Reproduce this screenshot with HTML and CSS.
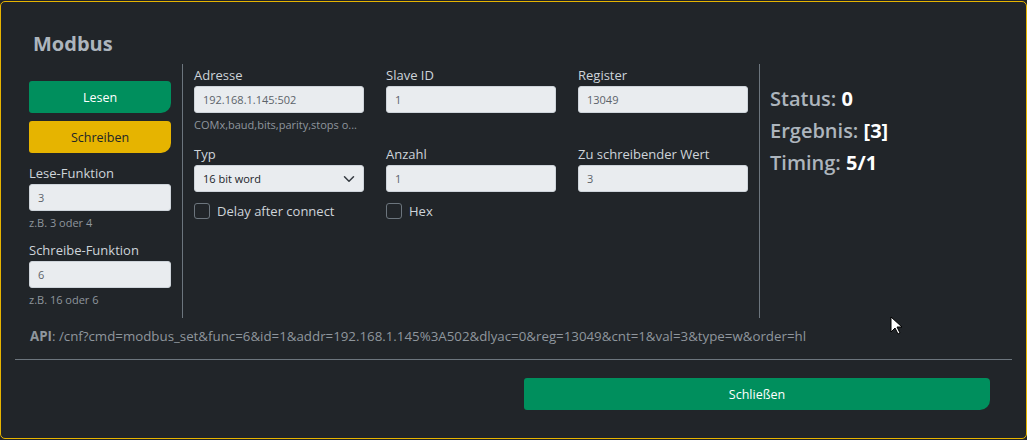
FILE: index.html
```html
<!DOCTYPE html>
<html lang="de">
  <head>
    <meta charset="UTF-8" />
    <meta name="viewport" content="width=device-width, initial-scale=1.0" />
    <title>Modbus</title>
    <link rel="stylesheet" href="styles.css">
  </head>
  <body>
    <div class="modal">
      <h4 class="modal-title">Modbus</h4>
      <div class="modal-body">
        <div class="row">
          <div class="col-left">
            <button class="btn btn-green">Lesen</button>
            <button class="btn btn-yellow">Schreiben</button>

            <div class="field">
              <label>Lese-Funktion</label>
              <input class="input" type="text" value="3" />
              <small class="help">z.B. 3 oder 4</small>
            </div>
            <div class="field field-next">
              <label>Schreibe-Funktion</label>
              <input class="input" type="text" value="6" />
              <small class="help">z.B. 16 oder 6</small>
            </div>
          </div>

          <div class="col-mid">
            <div class="field">
              <label>Adresse</label>
              <input class="input" type="text" value="192.168.1.145:502" />
              <small class="help">COMx,baud,bits,parity,stops o...</small>
            </div>
            <div class="field">
              <label>Slave ID</label>
              <input class="input" type="text" value="1" />
            </div>
            <div class="field">
              <label>Register</label>
              <input class="input" type="text" value="13049" />
            </div>

            <div class="field">
              <label>Typ</label>
              <div class="select-wrap">
                <select class="input select">
                  <option>16 bit word</option>
                  <option>32 bit word</option>
                  <option>float</option>
                </select>
                <svg class="chevron" width="12" height="12" viewBox="0 0 16 16">
                  <path d="M2 5l6 6 6-6" fill="none" stroke="#343a40" stroke-width="2" stroke-linecap="round" stroke-linejoin="round" />
                </svg>
              </div>
              <label class="check"><span class="box"></span>Delay after connect</label>
            </div>
            <div class="field">
              <label>Anzahl</label>
              <input class="input" type="text" value="1" />
              <label class="check"><span class="box"></span>Hex</label>
            </div>
            <div class="field">
              <label>Zu schreibender Wert</label>
              <input class="input" type="text" value="3" />
            </div>
          </div>

          <div class="col-status">
            <div class="stat">Status: <b>0</b></div>
            <div class="stat">Ergebnis: <b>[3]</b></div>
            <div class="stat">Timing: <b>5/1</b></div>
          </div>
        </div>

        <p class="api"><b>API</b>: /cnf?cmd=modbus_set&amp;func=6&amp;id=1&amp;addr=192.168.1.145%3A502&amp;dlyac=0&amp;reg=13049&amp;cnt=1&amp;val=3&amp;type=w&amp;order=hl</p>
      </div>

      <hr class="sep" />

      <div class="modal-footer">
        <button class="btn btn-green btn-close">Schließen</button>
      </div>

      <svg class="cursor" width="14" height="20" viewBox="0 0 14 20">
        <path d="M1 1v15l4-4 3 6 2-1-3-6h5z" fill="#fff" stroke="#000" stroke-width="1" stroke-linejoin="round" />
      </svg>
    </div>
  </body>
</html>
```

FILE: styles.css
```css
* {
  box-sizing: border-box;
}

body {
  margin: 0;
  background-color: #212529;
  font-family: "Open Sans", "Noto Sans", Arial, sans-serif;
  color: #ced4da;
}

.modal {
  position: relative;
  margin-top: 1px;
  height: 438px;
  border: 1px solid #e6b400;
  border-radius: 5px;
  background-color: #212529;
  padding-top: 28px;
}

.modal-title {
  margin: 0 0 6px 32px;
  font-size: 20px;
  line-height: 28px;
  font-weight: 700;
  color: #adb5bd;
}

.modal-body {
  padding-left: 28px;
}

.row {
  display: flex;
}

.col-left {
  width: 154px;
  padding: 17px 11px 10px 0;
  border-right: 1px solid #6c757d;
  display: flex;
  flex-direction: column;
}

.col-mid {
  width: 577px;
  padding: 2px 11px 0 11px;
  border-right: 1px solid #6c757d;
  display: grid;
  grid-template-columns: repeat(3, 170px);
  grid-template-rows: 67px auto;
  column-gap: 22px;
  row-gap: 12px;
  align-content: start;
}

.col-status {
  padding: 19px 0 0 10px;
}

.stat {
  font-size: 20px;
  line-height: 32px;
  font-weight: 600;
  color: #adb5bd;
}

.stat b {
  color: #fff;
  font-weight: 700;
}

.btn {
  height: 32px;
  border: none;
  border-radius: 3px 4px 10px 3px;
  font-family: inherit;
  font-size: 12.5px;
  cursor: pointer;
}

.btn-green {
  background-color: #008f5d;
  color: #fff;
}

.btn-yellow {
  background-color: #e6b400;
  color: #212529;
  margin-top: 8px;
}

.field {
  display: flex;
  flex-direction: column;
  min-width: 0;
}

.col-left .field {
  margin-top: 11px;
}

.col-left .field-next {
  margin-top: 10px;
}

label {
  font-size: 13px;
  line-height: 18px;
  color: #ced4da;
  margin-bottom: 2px;
}

.input {
  height: 27px;
  width: 100%;
  border: 1px solid #ced4da;
  border-radius: 3px;
  background-color: #e9ecef;
  color: #5c636a;
  font-family: inherit;
  font-size: 11px;
  padding: 0 8px;
  outline: none;
}

.select-wrap {
  position: relative;
}

.select {
  appearance: none;
  -webkit-appearance: none;
  color: #212529;
}

.chevron {
  position: absolute;
  right: 9px;
  top: 8px;
  pointer-events: none;
}

.help {
  font-size: 11px;
  line-height: 16px;
  margin-top: 4px;
  color: #8f969d;
  white-space: nowrap;
}

.check {
  display: flex;
  align-items: center;
  margin-top: 10px;
  font-size: 13px;
  color: #ced4da;
}

.box {
  width: 16px;
  height: 16px;
  border: 1px solid #6c757d;
  border-radius: 3px;
  margin-right: 7px;
}

.api {
  margin: 9px 0 0 1px;
  font-size: 13.3px;
  line-height: 18px;
  color: #8f969d;
}

.api b {
  color: #8f969d;
}

.sep {
  margin: 14px 14px 0 14px;
  border: none;
  border-top: 1px solid #6c757d;
}

.modal-footer {
  display: flex;
  justify-content: flex-end;
  padding: 18px 36px 0 0;
}

.btn-close {
  width: 466px;
}

.cursor {
  position: absolute;
  left: 889px;
  top: 314px;
}
```
